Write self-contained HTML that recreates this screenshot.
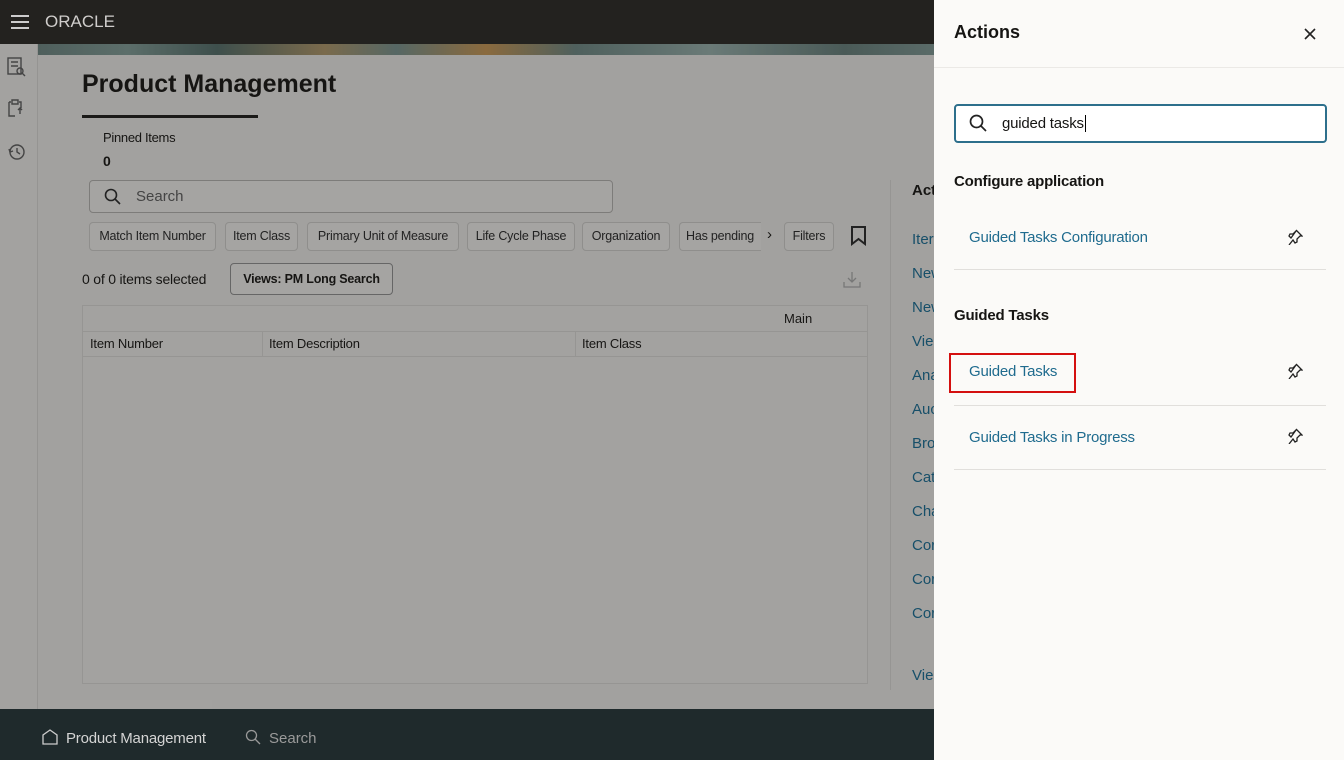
<!DOCTYPE html>
<html><head><style>
*{box-sizing:border-box;margin:0;padding:0}
body{width:1344px;height:760px;overflow:hidden;position:relative;font-family:"Liberation Sans",sans-serif;background:#a2a19f;color:#161513}
.a{position:absolute}
.top{left:0;top:0;width:934px;height:44px;background:#23221f}
.banner{left:38px;top:44px;width:896px;height:11px;background:linear-gradient(90deg,#4f5f5c,#5c6e6a 10%,#3e4f4c 20%,#7a6a4c 32%,#566764 40%,#8a6a3e 50%,#4f605d 60%,#6a7a77 75%,#4a5a57 90%,#5a6b68)}
.side{left:0;top:44px;width:38px;height:665px;background:#a3a2a0;border-right:1px solid #959492}
.chip{position:absolute;top:222px;height:29px;border:1px solid #8f8e8c;border-radius:4px;font-size:12.5px;letter-spacing:-0.2px;line-height:27px;text-align:center;white-space:nowrap;overflow:hidden;color:#222;background:#a5a4a2}
.bottom{left:0;top:709px;width:934px;height:51px;background:#1f2a2c}
.panel{left:934px;top:0;width:410px;height:760px;background:#fbfaf8}
.lnk{color:#1f6b8e;font-size:15px;letter-spacing:-0.2px}
.sep{left:954px;width:372px;height:1px;background:#e1dfdc}
</style></head><body>
<div class="a top"></div>
<svg class="a" style="left:10px;top:14px" width="20" height="16"><path d="M1 2h18M1 8h18M1 14h18" stroke="#ccc" stroke-width="2"/></svg>
<div class="a" style="left:45px;top:12px;color:#cfcdcb;font-size:17px;letter-spacing:0px">ORACLE</div>
<div class="a banner"></div>
<div class="a side"></div>
<svg class="a" style="left:6px;top:56px" width="22" height="120" fill="none" stroke="#444" stroke-width="1.4">
<rect x="2" y="2" width="13" height="16"/><path d="M5 6h7M5 10h7"/><circle cx="14" cy="15" r="3"/><path d="M16 17l3 3"/>
<path d="M3 46v14h6M5 46h-2M13 46h2v6M6 44h6v4H6z M14 58v-6M12 54l2-2 2 2"/>
<circle cx="11" cy="96" r="7"/><path d="M11 92v4l3 2M3 93l1 3 3-1"/>
</svg>
<div class="a" style="left:82px;top:70px;font-size:25px;font-weight:bold">Product Management</div>
<div class="a" style="left:82px;top:115px;width:176px;height:3px;background:#1b1a18"></div>
<div class="a" style="left:103px;top:130px;font-size:13px;letter-spacing:-0.3px">Pinned Items</div>
<div class="a" style="left:103px;top:153px;font-size:14px;font-weight:bold">0</div>
<div class="a" style="left:89px;top:180px;width:524px;height:33px;border:1px solid #7d7c7a;border-radius:4px;background:#a5a4a2"></div>
<svg class="a" style="left:104px;top:188px" width="18" height="18" fill="none" stroke="#222" stroke-width="1.6"><circle cx="7" cy="7" r="5.5"/><path d="M11 11l5 5"/></svg>
<div class="a" style="left:136px;top:188px;font-size:15px;color:#444">Search</div>
<div class="chip" style="left:89px;width:127px">Match Item Number</div>
<div class="chip" style="left:225px;width:73px">Item Class</div>
<div class="chip" style="left:307px;width:152px">Primary Unit of Measure</div>
<div class="chip" style="left:467px;width:108px">Life Cycle Phase</div>
<div class="chip" style="left:582px;width:88px">Organization</div>
<div class="chip" style="left:679px;width:82px;text-align:left;padding-left:6px;border-right:none;border-radius:4px 0 0 4px">Has pending</div>
<div class="a" style="left:767px;top:226px;font-size:15px">›</div>
<div class="chip" style="left:784px;width:50px">Filters</div>
<svg class="a" style="left:850px;top:226px" width="18" height="20" fill="none" stroke="#222" stroke-width="2"><path d="M2 1h13v17l-6.5-5L2 18z"/></svg>
<div class="a" style="left:82px;top:271px;font-size:14px;letter-spacing:-0.2px">0 of 0 items selected</div>
<div class="a" style="left:230px;top:263px;width:163px;height:32px;border:1px solid #666;border-radius:4px;font-size:12.5px;font-weight:bold;line-height:30px;text-align:center;background:#a5a4a2;letter-spacing:-0.2px">Views: PM Long Search</div>
<svg class="a" style="left:843px;top:271px" width="18" height="17" fill="none" stroke="#777" stroke-width="1.3"><path d="M9 1v10M5 7l4 4 4-4M1 11v5h16v-5"/></svg>
<div class="a" style="left:82px;top:305px;width:786px;height:379px;border:1px solid #969593;background:#a3a2a0"></div>
<div class="a" style="left:83px;top:331px;width:784px;height:1px;background:#969593"></div>
<div class="a" style="left:83px;top:356px;width:784px;height:1px;background:#969593"></div>
<div class="a" style="left:262px;top:331px;width:1px;height:25px;background:#969593"></div>
<div class="a" style="left:575px;top:331px;width:1px;height:25px;background:#969593"></div>
<div class="a" style="left:784px;top:311px;font-size:13px">Main</div>
<div class="a" style="left:90px;top:336px;font-size:13px;letter-spacing:-0.2px">Item Number</div>
<div class="a" style="left:269px;top:336px;font-size:13px;letter-spacing:-0.2px">Item Description</div>
<div class="a" style="left:582px;top:336px;font-size:13px;letter-spacing:-0.2px">Item Class</div>
<div class="a" style="left:890px;top:180px;width:1px;height:510px;background:#969593"></div>
<div class="a" style="left:912px;top:182px;font-size:15px;font-weight:bold">Act</div>
<div class="a" style="left:912px;top:223px;font-size:15px;line-height:34px;color:#174f69">Iter<br>New<br>New<br>Vie<br>Ana<br>Auc<br>Bro<br>Cat<br>Cha<br>Cor<br>Cor<br>Cor</div>
<div class="a" style="left:912px;top:667px;font-size:15px;color:#174f69">Vie</div>
<div class="a" style="left:38px;top:700px;width:174px;height:12px;background:#a3a2a0;border-radius:0 0 4px 4px"></div>
<div class="a bottom"></div>
<svg class="a" style="left:42px;top:729px" width="16" height="16" fill="none" stroke="#ccc" stroke-width="1.3"><path d="M1 15V6l7-5 7 5v9z"/></svg>
<div class="a" style="left:66px;top:730px;font-size:15px;color:#d4d4d4;letter-spacing:-0.2px">Product Management</div>
<svg class="a" style="left:245px;top:729px" width="16" height="16" fill="none" stroke="#999" stroke-width="1.3"><circle cx="6.5" cy="6.5" r="5"/><path d="M10 10l5 5"/></svg>
<div class="a" style="left:269px;top:730px;font-size:15px;color:#9a9a9a">Search</div>
<div class="a panel"></div>
<div class="a" style="left:934px;top:67px;width:410px;height:1px;background:#ebe9e6"></div>
<div class="a" style="left:954px;top:22px;font-size:18px;font-weight:bold">Actions</div>
<svg class="a" style="left:1303px;top:27px" width="14" height="14" stroke="#222" stroke-width="1.6"><path d="M2 2l10 10M12 2L2 12"/></svg>
<div class="a" style="left:954px;top:104px;width:373px;height:39px;border:2px solid #2d6f8c;border-radius:4px;background:#fff"></div>
<svg class="a" style="left:969px;top:114px" width="19" height="19" fill="none" stroke="#222" stroke-width="1.7"><circle cx="7.5" cy="7.5" r="6"/><path d="M12 12l5 5"/></svg>
<div class="a" style="left:1002px;top:115px;font-size:15px;letter-spacing:-0.2px">guided tasks<span style="border-left:1px solid #000;margin-left:1px"></span></div>
<div class="a" style="left:954px;top:173px;font-size:15px;font-weight:bold;letter-spacing:-0.2px">Configure application</div>
<div class="a lnk" style="left:969px;top:229px">Guided Tasks Configuration</div>
<div class="a sep" style="top:269px"></div>
<div class="a" style="left:954px;top:307px;font-size:15px;font-weight:bold;letter-spacing:-0.2px">Guided Tasks</div>
<div class="a" style="left:949px;top:353px;width:127px;height:40px;border:2px solid #d40f0f"></div>
<div class="a lnk" style="left:969px;top:363px">Guided Tasks</div>
<div class="a sep" style="top:405px"></div>
<div class="a lnk" style="left:969px;top:429px">Guided Tasks in Progress</div>
<div class="a sep" style="top:469px"></div>
<svg class="a" style="left:1287px;top:229px" width="16" height="16" fill="none" stroke="#222" stroke-width="1.3"><path d="M9 1l6 6-2 0-3 3 0 3-2 1-2-3-4 5M4 9L2 7l1-2h3l3-3z"/></svg>
<svg class="a" style="left:1287px;top:363px" width="16" height="16" fill="none" stroke="#222" stroke-width="1.3"><path d="M9 1l6 6-2 0-3 3 0 3-2 1-2-3-4 5M4 9L2 7l1-2h3l3-3z"/></svg>
<svg class="a" style="left:1287px;top:428px" width="16" height="16" fill="none" stroke="#222" stroke-width="1.3"><path d="M9 1l6 6-2 0-3 3 0 3-2 1-2-3-4 5M4 9L2 7l1-2h3l3-3z"/></svg>
</body></html>
